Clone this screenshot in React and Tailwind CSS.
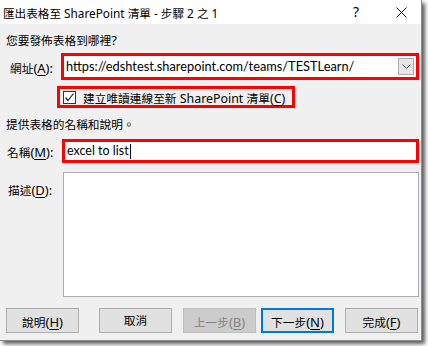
import React from 'react'

// split mixed text so CJK glyphs and latin glyphs can get their own size
const Mixed = ({ text, cjk = 'text-[11.7px]', lat = 'text-[13px]' }) =>
  text.split(/([\u2E80-\u9FFF\u3000-\u303F\uFF00-\uFFEF]+)/).map((part, i) =>
    part ? (
      <span
        key={i}
        className={/[\u2E80-\u9FFF\u3000-\u303F\uFF00-\uFFEF]/.test(part) ? cjk : lat}
      >
        {part}
      </span>
    ) : null
  )

const Key = ({ k }) => (
  <span className="text-[13px]">
    (<span className="underline underline-offset-2">{k}</span>)
  </span>
)

const Label = ({ name, k, colon = true }) => (
  <span className="whitespace-nowrap leading-none">
    <span className="text-[11.7px]">{name}</span>
    <Key k={k} />
    {colon && <span className="text-[13px]">:</span>}
  </span>
)

const Button = ({ children, className = '' }) => (
  <div
    className={`w-[73px] h-[25px] flex items-center justify-center border ${className}`}
  >
    {children}
  </div>
)

const App = () => {
  return (
    <div className="w-[428px] h-[346px] bg-white font-['Noto_Sans','Noto_Sans_CJK_TC',sans-serif] text-black">
      <div className="w-[422px] h-[341px] bg-[#f0f0f0] flex flex-col border-r border-b border-[#8a8a8a] shadow-[3px_3px_4px_rgba(0,0,0,0.65)]">
        {/* title bar */}
        <div className="h-[24px] bg-white flex items-center pl-[3px] shrink-0">
          <div className="leading-none">
            <Mixed text="匯出表格至 SharePoint 清單 - 步驟 2 之 1" cjk="text-[11.6px]" lat="text-[11.8px]" />
          </div>
          <div className="ml-auto text-[14px] leading-none mr-[37px]">?</div>
          <svg width="11" height="11" viewBox="0 0 11 11" className="mr-[14px]">
            <path d="M0.5 0.5 L10.5 10.5 M10.5 0.5 L0.5 10.5" stroke="#111" strokeWidth="1" fill="none" />
          </svg>
        </div>

        {/* section 1 */}
        <div className="h-[17px] mt-[8px] pl-[6px] flex items-center leading-none">
          <Mixed text="您要發佈表格到哪裡?" />
        </div>

        <div className="h-[27px] mt-[4px] flex items-center">
          <div className="w-[61px] pl-[10px]">
            <Label name="網址" k="A" />
          </div>
          <div className="w-[358px] h-[27px] border-[3px] border-[#ff0000] bg-white flex items-center pl-[2px] pr-[2px]">
            <span className="font-['Lato'] text-[12.8px] leading-none flex-1">
              https://edshtest.sharepoint.com/teams/TESTLearn/
            </span>
            <div className="w-[16px] h-[17px] border border-[#adadad] bg-[#e6e6e6] flex items-center justify-center">
              <svg width="9" height="5" viewBox="0 0 9 5">
                <path d="M0.5 0.5 L4.5 4.5 L8.5 0.5" stroke="#555" strokeWidth="1" fill="none" />
              </svg>
            </div>
          </div>
        </div>

        <div className="h-[22px] mt-[6px] pl-[57px] flex">
          <div className="w-[238px] h-[22px] border-[3px] border-[#ff0000] flex items-center pl-[3px]">
            <div className="w-[13px] h-[13px] border border-[#333] bg-white flex items-center justify-center">
              <svg width="11" height="11" viewBox="0 0 11 11">
                <path d="M1.5 5.5 L4 8.5 L9.5 1.5" stroke="#222" strokeWidth="1.2" fill="none" />
              </svg>
            </div>
            <div className="ml-[7px] leading-none whitespace-nowrap">
              <Mixed text="建立唯讀連線至新 SharePoint 清單" lat="text-[12.4px]" />
              <span className="text-[12.4px]">
                (<span className="underline underline-offset-2">C</span>)
              </span>
            </div>
          </div>
        </div>

        {/* section 2 */}
        <div className="h-[17px] mt-[8px] pl-[6px] flex items-center leading-none">
          <Mixed text="提供表格的名稱和說明。" />
        </div>

        <div className="h-[24px] mt-[6px] flex items-center">
          <div className="w-[62px] pl-[7px]">
            <Label name="名稱" k="M" />
          </div>
          <div className="w-[357px] h-[24px] border-[3px] border-[#ff0000] bg-white flex items-center pl-[2px]">
            <span className="font-['Lato'] text-[12.5px] leading-none">excel to list</span>
            <span className="w-px h-[15px] bg-black ml-px" />
          </div>
        </div>

        <div className="h-[125px] mt-[9px] flex">
          <div className="w-[63px] pl-[8px] pt-[5px]">
            <Label name="描述" k="D" />
          </div>
          <div className="w-[356px] h-[125px] border border-[#abadb3] bg-white" />
        </div>

        {/* buttons */}
        <div className="h-[25px] mt-[11px] flex">
          <Button className="ml-[6px] bg-[#e1e1e1] border-[#adadad]">
            <Label name="說明" k="H" colon={false} />
          </Button>
          <Button className="ml-[20px] bg-[#e1e1e1] border-[#adadad]">
            <span className="text-[11.7px] leading-none">取消</span>
          </Button>
          <Button className="ml-[11px] bg-[#cccccc] border-[#bfbfbf] text-[#838383]">
            <Label name="上一步" k="B" colon={false} />
          </Button>
          <Button className="ml-[5px] bg-[#e1e1e1] border-2 border-[#0078d7]">
            <Label name="下一步" k="N" colon={false} />
          </Button>
          <Button className="ml-[11px] bg-[#e1e1e1] border-[#adadad]">
            <Label name="完成" k="F" colon={false} />
          </Button>
        </div>
      </div>
    </div>
  )
}

export default App
